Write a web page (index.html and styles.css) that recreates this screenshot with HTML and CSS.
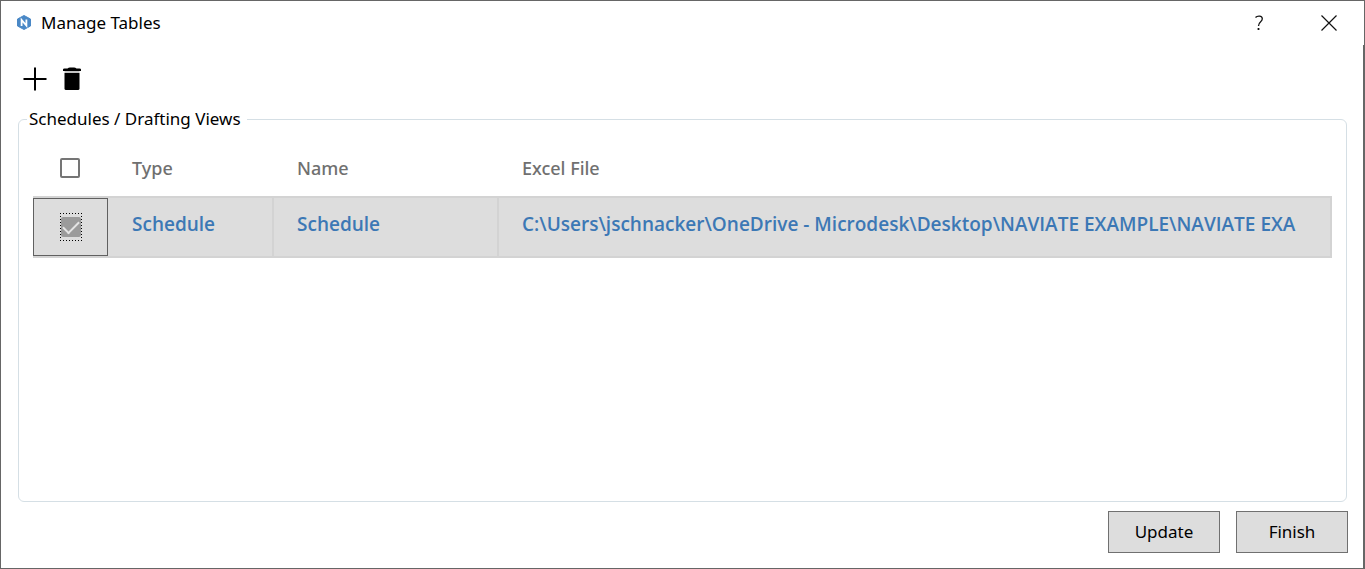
FILE: index.html
```html
<!DOCTYPE html>
<html lang="en">
<head>
<meta charset="utf-8">
<title>Manage Tables</title>
<link rel="stylesheet" href="styles.css">
</head>
<body>
<main class="window">
  <header class="titlebar">
    <svg class="logo" width="14" height="16" viewBox="0 0 14 16" aria-hidden="true">
      <path d="M7 .5 13.500 4v7L7 14.500.5 11V4z" fill="#4a88c6" stroke="#4a88c6" stroke-linejoin="round"/>
      <path d="M4.600 11V5L9.400 10.500V4.500" fill="none" stroke="#fff" stroke-width="1.800"/>
    </svg>
    <h1 class="title">Manage Tables</h1>
    <button class="caption-button" type="button" aria-label="Help">
      <svg width="10" height="16" viewBox="0 0 10 16" fill="none" stroke="#111" stroke-width="1.300"><path d="M1.500 2.500C3 .8 8.300.2 8.300 3.800 8.300 7 4.500 6.500 4.500 11"/><path d="M4.500 13v2" stroke-width="1.800"/></svg>
    </button>
    <button class="caption-button" type="button" aria-label="Close">
      <svg width="16" height="16" viewBox="0 0 16 16" fill="none" stroke="#111" stroke-width="1.200"><path d="M.5.5l15 15M15.500.5l-15 15"/></svg>
    </button>
  </header>
  <div class="content">
    <div class="toolbar">
      <button class="tool-button" type="button" aria-label="Add">
        <svg width="24" height="24" viewBox="0 0 24 24" fill="none" stroke="#000" stroke-width="2"><path d="M12 .5v23M.5 12h23"/></svg>
      </button>
      <button class="tool-button" type="button" aria-label="Delete">
        <svg width="18" height="24" viewBox="0 0 18 24"><path d="M0 4V2.500Q0 1.500 1.500 1.500H4.500Q5.500.5 7 .5h4Q12.500.5 13.500 1.500h3Q18 1.500 18 2.500V4z"/><path d="M1.500 4h15v2h-15z" fill="#c4c4c4"/><path d="M1.500 6h15v15.500q0 1.500-1.500 1.500H3q-1.500 0-1.500-1.500z"/></svg>
      </button>
    </div>
    <fieldset class="group">
      <legend class="legend">Schedules / Drafting Views</legend>
      <table class="grid">
        <colgroup><col class="col-check"><col class="col-type"><col class="col-name"><col></colgroup>
        <thead>
          <tr>
            <th class="check-cell"><input class="checkbox" type="checkbox" aria-label="Select all"></th>
            <th>Type</th>
            <th>Name</th>
            <th>Excel File</th>
          </tr>
        </thead>
        <tbody>
          <tr>
            <td class="check-cell"><div class="focused"><span class="focus-ring"><input class="checkbox" type="checkbox" aria-label="Select Schedule" checked></span></div></td>
            <td>Schedule</td>
            <td>Schedule</td>
            <td><div class="path">C:\Users\jschnacker\OneDrive - Microdesk\Desktop\NAVIATE EXAMPLE\NAVIATE EXA</div></td>
          </tr>
        </tbody>
      </table>
    </fieldset>
    <footer class="actions">
      <button class="button" type="button">Update</button>
      <button class="button" type="button">Finish</button>
    </footer>
  </div>
</main>
</body>
</html>
```
FILE: styles.css
```css
* {
  box-sizing: border-box;
}

body {
  margin: 0;
  font-family: "Segoe UI", "Noto Sans", sans-serif;
  font-size: 17px;
  line-height: 24px;
  color: #000;
  background: #fff;
}

.window {
  display: flex;
  flex-direction: column;
  min-height: 100vh;
  border: 1px solid #666;
}

.titlebar {
  display: flex;
  align-items: center;
  height: 44px;
  padding-left: 16px;
}

.title {
  flex: 1;
  margin: 0 0 0 10px;
  font-size: 17px;
  font-weight: 400;
}

.caption-button {
  display: grid;
  place-items: center;
  width: 70px;
  height: 44px;
  padding: 0;
  border: 0;
  background: none;
}

.content {
  flex: 1;
  display: flex;
  flex-direction: column;
  padding: 22px 15px 15px 17px;
  border-right: 1px solid #666;
}

.toolbar {
  display: flex;
  gap: 16px;
  padding-left: 5px;
}

.tool-button {
  display: block;
  padding: 0;
  border: 0;
  background: none;
}

.tool-button svg,
.caption-button svg {
  display: block;
}

.group {
  flex: 1;
  min-width: 0;
  margin: 16px 1px 0 0;
  padding: 8px 14px;
  border: 1px solid #d5dfe5;
  border-radius: 6px;
}

.legend {
  margin-left: -6px;
  padding: 0 6px 0 2px;
}

.grid {
  width: 100%;
  table-layout: fixed;
  border-spacing: 0;
}

.col-check {
  width: 75px;
}

.col-type {
  width: 166px;
}

.col-name {
  width: 225px;
}

.grid th,
.grid td {
  padding: 0 23px 0 24px;
  text-align: left;
  font-size: 18px;
}

.grid th {
  height: 57px;
  color: #707070;
  font-weight: 500;
}

.grid td {
  height: 62px;
  padding-bottom: 6px;
  color: #3c78b5;
  font-family: "Segoe UI", "Open Sans", sans-serif;
  font-size: 19px;
  font-weight: 650;
  background: #ddd;
  border: solid #d3d3d3;
  border-width: 2px 2px 2px 0;
}

.grid th + th + th,
.grid td + td + td {
  padding-left: 23px;
}

.grid .check-cell {
  padding: 0;
  border-right: 0;
}

.focused {
  display: grid;
  place-items: center;
  height: 58px;
  border: 1px solid #606060;
}

.path {
  overflow: hidden;
  white-space: nowrap;
}

.checkbox {
  appearance: none;
  display: block;
  width: 20px;
  height: 20px;
  margin: 0 auto;
  border: 2px solid #757575;
  border-radius: 2px;
}

th .checkbox {
  margin-left: 27px;
}

.checkbox:checked {
  display: grid;
  place-items: center;
  border: 0;
  background: #9b9b9b;
}

.checkbox:checked::after {
  content: "";
  width: 14px;
  height: 7px;
  margin-bottom: 4px;
  border: solid #e4e4e4;
  border-width: 0 0 2px 2px;
  transform: rotate(-45deg);
}

.focus-ring {
  --dots-x: repeating-linear-gradient(90deg, #000 0 1px, transparent 1px 3px);
  --dots-y: repeating-linear-gradient(#000 0 1px, transparent 1px 3px);
  display: grid;
  place-items: center;
  width: 22px;
  height: 28px;
  padding: 1px;
  background:
    var(--dots-x) top / 100% 1px no-repeat,
    var(--dots-x) bottom / 100% 1px no-repeat,
    var(--dots-y) left / 1px 100% no-repeat,
    var(--dots-y) right / 1px 100% no-repeat;
}

.actions {
  display: flex;
  justify-content: flex-end;
  gap: 16px;
  padding-top: 9px;
}

.button {
  width: 112px;
  height: 42px;
  padding: 0;
  font: inherit;
  color: #000;
  background: #ddd;
  border: 1px solid #707070;
}
```
